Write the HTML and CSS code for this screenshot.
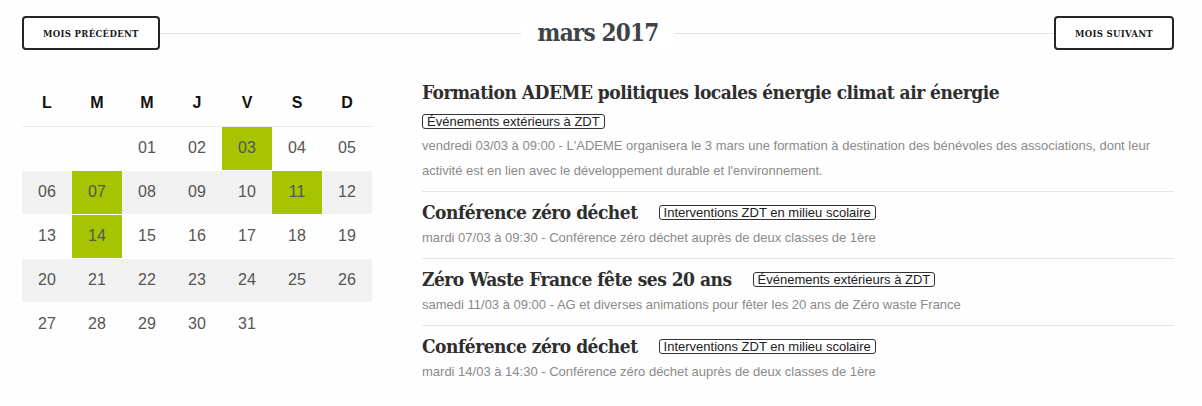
FILE: index.html
```html
<!DOCTYPE html>
<html lang="fr">
<head>
<meta charset="utf-8">
<title>Agenda - mars 2017</title>
<link rel="stylesheet" href="styles.css">
</head>
<body>
<div class="page">
  <header class="month-nav">
    <div class="nav-side nav-left">
      <a class="btn" href="#">Mois précédent</a>
      <span class="rule"></span>
    </div>
    <h2 class="month-title">mars 2017</h2>
    <div class="nav-side nav-right">
      <span class="rule"></span>
      <a class="btn" href="#">Mois suivant</a>
    </div>
  </header>

  <div class="content">
    <table class="cal">
      <thead>
        <tr><th>L</th><th>M</th><th>M</th><th>J</th><th>V</th><th>S</th><th>D</th></tr>
      </thead>
      <tbody>
        <tr><td></td><td></td><td>01</td><td>02</td><td class="has-event">03</td><td>04</td><td>05</td></tr>
        <tr class="alt"><td>06</td><td class="has-event">07</td><td>08</td><td>09</td><td>10</td><td class="has-event">11</td><td>12</td></tr>
        <tr><td>13</td><td class="has-event">14</td><td>15</td><td>16</td><td>17</td><td>18</td><td>19</td></tr>
        <tr class="alt"><td>20</td><td>21</td><td>22</td><td>23</td><td>24</td><td>25</td><td>26</td></tr>
        <tr><td>27</td><td>28</td><td>29</td><td>30</td><td>31</td><td></td><td></td></tr>
      </tbody>
    </table>

    <div class="events">
      <article class="event">
        <div class="event-head">
          <h3 class="event-title">Formation ADEME politiques locales énergie climat air énergie</h3>
          <div class="tags"><span class="tag">Événements extérieurs à ZDT</span></div>
        </div>
        <p class="event-desc">vendredi 03/03 à 09:00 - L'ADEME organisera le 3 mars une formation à destination des bénévoles des associations, dont leur activité est en lien avec le développement durable et l'environnement.</p>
      </article>
      <article class="event">
        <div class="event-head">
          <h3 class="event-title">Conférence zéro déchet</h3>
          <div class="tags"><span class="tag">Interventions ZDT en milieu scolaire</span></div>
        </div>
        <p class="event-desc">mardi 07/03 à 09:30 - Conférence zéro déchet auprès de deux classes de 1ère</p>
      </article>
      <article class="event">
        <div class="event-head">
          <h3 class="event-title">Zéro Waste France fête ses 20 ans</h3>
          <div class="tags"><span class="tag">Événements extérieurs à ZDT</span></div>
        </div>
        <p class="event-desc">samedi 11/03 à 09:00 - AG et diverses animations pour fêter les 20 ans de Zéro waste France</p>
      </article>
      <article class="event">
        <div class="event-head">
          <h3 class="event-title">Conférence zéro déchet</h3>
          <div class="tags"><span class="tag">Interventions ZDT en milieu scolaire</span></div>
        </div>
        <p class="event-desc">mardi 14/03 à 14:30 - Conférence zéro déchet auprès de deux classes de 1ère</p>
      </article>
    </div>
  </div>
</div>
</body>
</html>
```

FILE: styles.css
```css
* { box-sizing: border-box; }

html, body {
  margin: 0;
  padding: 0;
  background: #fefefe;
}

body {
  font-family: "Liberation Sans", Arial, sans-serif;
  color: #333;
}

.page {
  width: 1152px;
  margin: 0 0 0 22px;
  padding-top: 16px;
}

/* ---------- month navigation ---------- */
.month-nav {
  display: grid;
  grid-template-columns: 1fr auto 1fr;
  align-items: center;
  height: 34px;
}

.nav-side {
  display: flex;
  align-items: center;
}

.rule {
  flex: 1;
  height: 1px;
  background: #e3e3e3;
}

.btn {
  display: inline-flex;
  align-items: center;
  justify-content: center;
  height: 34px;
  padding: 0 19px;
  border: 2px solid #252525;
  border-radius: 4px;
  background: #fff;
  color: #1a1a1a;
  text-decoration: none;
  text-transform: uppercase;
  font-family: "DejaVu Serif", "Liberation Serif", serif;
  font-stretch: condensed;
  font-size: 9.5px;
  font-weight: 700;
  letter-spacing: 0.3px;
  white-space: nowrap;
}

.month-title {
  margin: 0;
  padding: 0 17px;
  background: #fff;
  font-family: "DejaVu Serif", "Liberation Serif", serif;
  font-stretch: condensed;
  font-weight: 700;
  font-size: 24px;
  letter-spacing: -0.8px;
  line-height: 26px;
  color: #3e4348;
}

/* ---------- content ---------- */
.content {
  display: flex;
  align-items: flex-start;
  gap: 50px;
  margin-top: 22px;
}

/* ---------- calendar ---------- */
.cal {
  flex: 0 0 350px;
  width: 350px;
  margin-top: 8px;
  border-collapse: collapse;
  table-layout: fixed;
}

.cal th {
  height: 46px;
  padding: 0;
  border-bottom: 1px solid #ececec;
  font-size: 16px;
  font-weight: 700;
  color: #111;
  text-align: center;
}

.cal td {
  width: 50px;
  height: 44px;
  padding: 0;
  border-bottom: 1px solid #fff;
  text-align: center;
  font-size: 16px;
  color: #555;
}

.cal tr.alt td { background: #f1f1f1; }
.cal tbody tr:last-child td { border-bottom: 0; }

.cal td.has-event,
.cal tr.alt td.has-event {
  background: #a6c400;
}

/* ---------- events ---------- */
.events {
  flex: 1;
  min-width: 0;
}

.event {
  padding: 7px 0 8px;
  border-top: 1px solid #e6e6e6;
}

.event:first-child {
  border-top: 0;
}

.event-head {
  display: flex;
  flex-wrap: wrap;
  align-items: center;
  column-gap: 21px;
  row-gap: 4px;
}

.event-title {
  margin: 0;
  font-family: "DejaVu Serif", "Liberation Serif", serif;
  font-stretch: condensed;
  font-weight: 700;
  font-size: 19px;
  letter-spacing: -0.5px;
  line-height: 26px;
  color: #2e2e2e;
}

.tags {
  display: flex;
  align-items: center;
  height: 24px;
}

.tag {
  display: inline-block;
  padding: 0 4px;
  border: 1px solid #333;
  border-radius: 3px;
  font-size: 13px;
  line-height: 13px;
  color: #222;
}

.event-desc {
  margin: 0;
  font-size: 13px;
  line-height: 25px;
  color: #8a8a8a;
}
```
